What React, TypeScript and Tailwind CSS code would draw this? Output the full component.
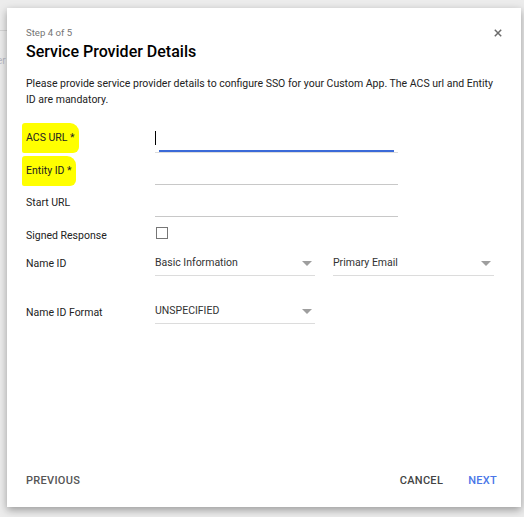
import React from "react";

function Caret() {
  return (
    <svg width="10" height="5" viewBox="0 0 10 5" className="shrink-0">
      <path d="M0 0h10L5 5z" fill="#9e9e9e" />
    </svg>
  );
}

function Select({ value, className }: { value: string; className: string }) {
  return (
    <div className={`flex items-center justify-between border-b border-[#dcdcdc] pb-[5px] ${className}`}>
      <span className="text-[10.5px] leading-[14px] text-[#333]">{value}</span>
      <span className="mr-[3px]"><Caret /></span>
    </div>
  );
}

function Label({ text, mark }: { text: string; mark?: boolean }) {
  return (
    <div className="w-[129px] shrink-0 text-[10.5px] leading-[14px] text-[#222]">
      {mark ? (
        <span className="relative inline-block">
          <span className="absolute -inset-x-[4px] -inset-y-[8px] rounded-[3px_9px_6px_2px] bg-[#ffff00]" />
          <span className="relative">{text}</span>
        </span>
      ) : (
        text
      )}
    </div>
  );
}

export default function App() {
  return (
    <div className="relative h-[517px] w-[524px] overflow-hidden bg-[#ececec] font-['Roboto',sans-serif]">
      <div className="absolute left-0 top-[30px] h-px w-[7px] bg-[#d4d4d4]" />
      <div className="absolute left-[-3px] top-[53px] text-[10px] text-[#b9b9c4]">er</div>
      <div className="absolute left-[7px] top-[8px] flex h-[499px] w-[514px] flex-col bg-white px-[19px] shadow-[0_3px_8px_rgba(0,0,0,0.35)]">
        <div className="flex items-start justify-between pt-[18px]">
          <div>
            <div className="text-[9.6px] leading-[13px] text-[#757575]">Step 4 of 5</div>
            <div className="mt-[2px] text-[16px] font-medium leading-[22px] text-black">Service Provider Details</div>
          </div>
          <svg width="8" height="8" viewBox="0 0 8 8" className="mt-[3px]">
            <path d="M0.8 0.8l6.4 6.4M7.2 0.8L0.8 7.2" stroke="#6b6b6b" strokeWidth="1.5" />
          </svg>
        </div>
        <p className="mt-[13px] text-[10.5px] leading-[16px] text-[#222]">
          Please provide service provider details to configure SSO for your Custom App. The ACS url and Entity ID are mandatory.
        </p>

        <div className="mt-[23px] flex items-start">
          <Label text="ACS URL *" mark />
          <div className="w-[243px]">
            <div className="h-[14px] w-px bg-black" />
            <div className="mt-[5px] border-b border-[#dcdcdc]">
              <div className="mx-[4px] h-[2px] bg-[#3b6ad8]" />
            </div>
          </div>
        </div>

        <div className="mt-[11px] flex items-start">
          <Label text="Entity ID *" mark />
          <div className="h-[21px] w-[243px] border-b border-[#c8c8c8]" />
        </div>

        <div className="mt-[11px] flex items-start">
          <Label text="Start URL" />
          <div className="h-[21px] w-[243px] border-b border-[#c8c8c8]" />
        </div>

        <div className="mt-[12px] flex items-start">
          <Label text="Signed Response" />
          <div className="-mt-[2px] ml-[1px] h-[12px] w-[12px] border border-[#767676]" />
        </div>

        <div className="mt-[14px] flex items-start">
          <Label text="Name ID" />
          <Select value="Basic Information" className="-mt-[1px] w-[160px]" />
          <Select value="Primary Email" className="-mt-[1px] ml-[18px] w-[161px]" />
        </div>

        <div className="mt-[30px] flex items-start">
          <Label text="Name ID Format" />
          <Select value="UNSPECIFIED" className="-mt-[2px] w-[160px]" />
        </div>

        <div className="mt-auto flex items-center pb-[19px] text-[11px] font-medium leading-[14px] tracking-[0.3px]">
          <span className="text-[#555]">PREVIOUS</span>
          <span className="ml-auto text-[#444]">CANCEL</span>
          <span className="ml-[25px] mr-[5px] text-[#4a76e8]">NEXT</span>
        </div>
      </div>
    </div>
  );
}
